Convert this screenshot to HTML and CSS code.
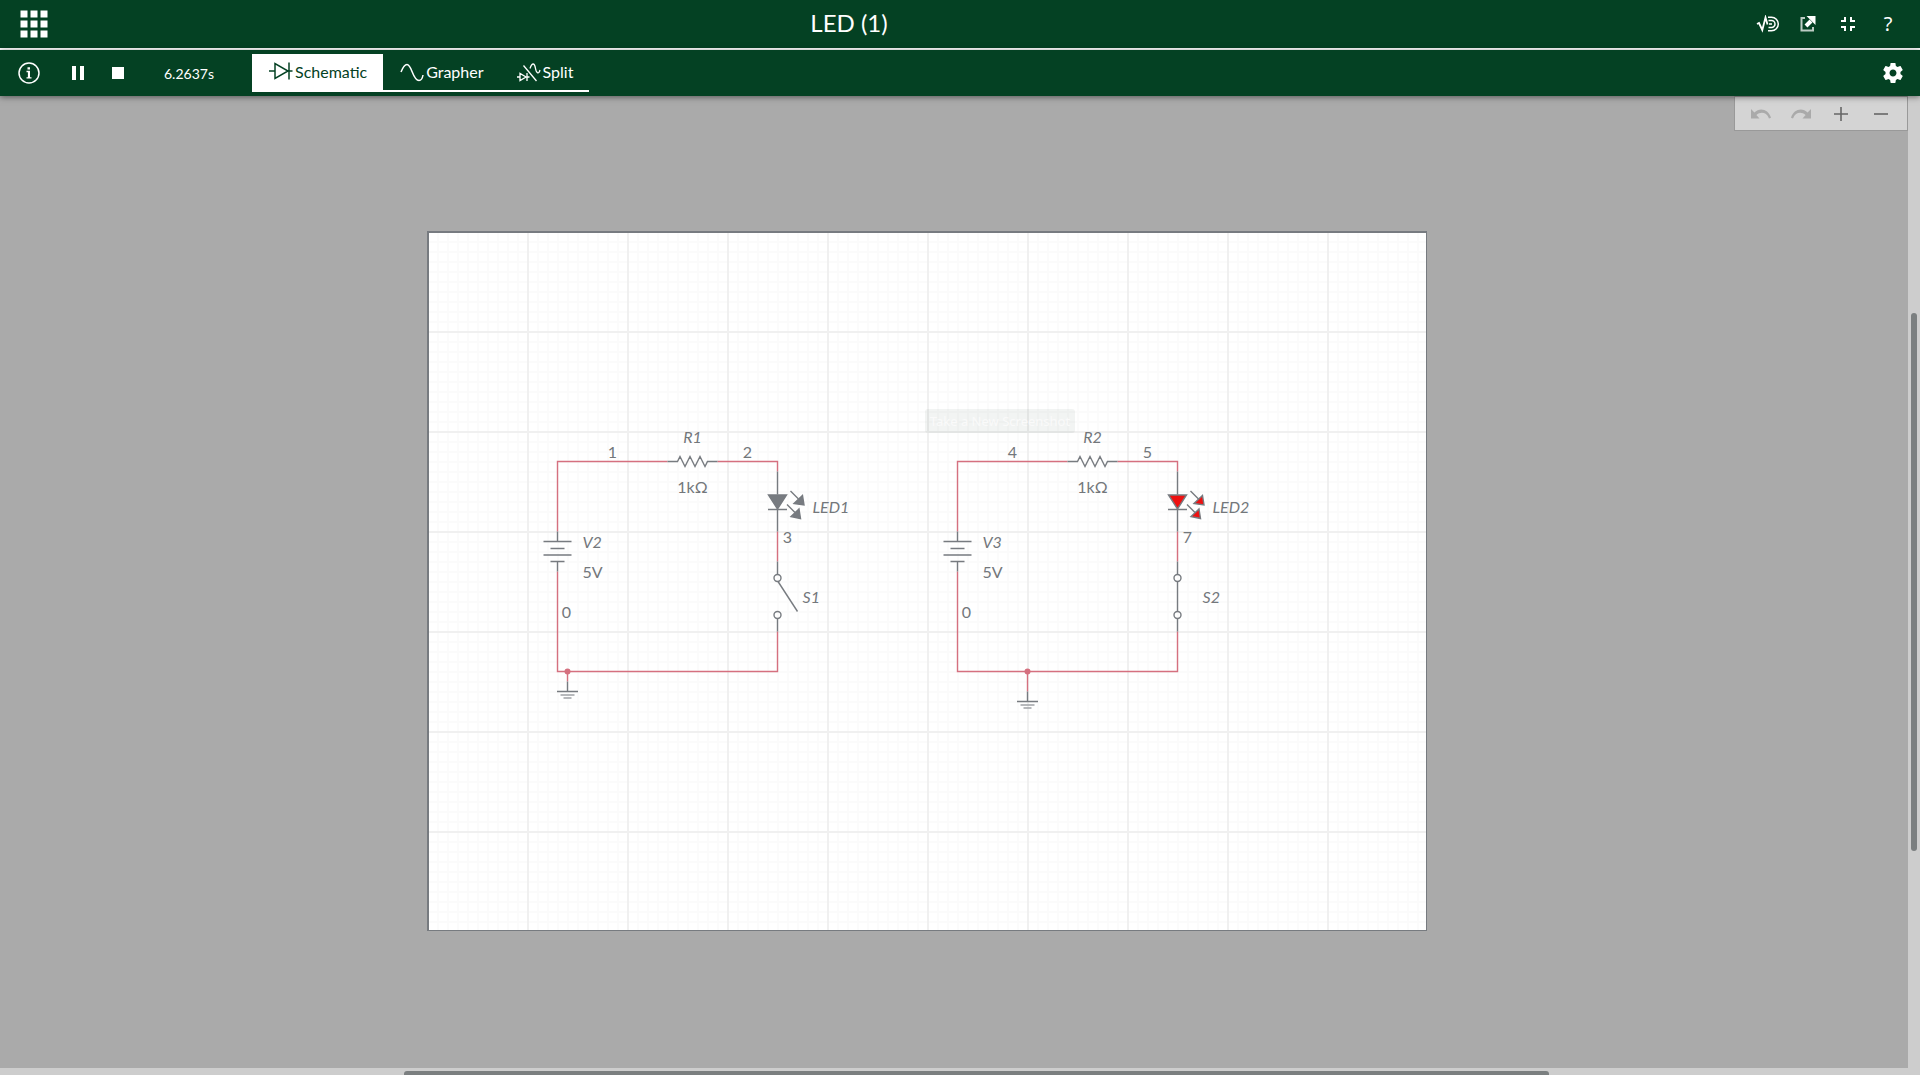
FILE: index.html
```
<!DOCTYPE html>
<html lang="en">
<head>
<meta charset="utf-8">
<title>LED (1)</title>
<meta name="viewport" content="width=device-width, initial-scale=1">
<link rel="stylesheet" href="styles.css">
</head>
<body>
<div class="app">
  <header class="titlebar">
    <button class="icon-btn apps-btn" aria-label="Apps">
      <svg width="28" height="28" viewBox="0 0 28 28" fill="#fff"><path d="M.5.5h7v7h-7zM10.500.5h7v7h-7zM20.500.5h7v7h-7zM.5 10.500h7v7h-7zM10.500 10.500h7v7h-7zM20.500 10.500h7v7h-7zM.5 20.500h7v7h-7zM10.500 20.500h7v7h-7zM20.500 20.500h7v7h-7z"/></svg>
    </button>
    <h1 class="title">LED (1)</h1>
    <div class="title-actions">
      <button class="icon-btn" aria-label="Multisim Touch">
        <svg width="24" height="18" viewBox="0 0 24 18" fill="none" stroke="#fff" stroke-width="1.800"><path d="M1 9l2-1 3.300 7L9.500 2.500l2 7"/><path stroke-width="1.500" d="M12 2.200h3.500a6.800 6.800 0 0 1 0 13.600H12M12.500 5.500h3a3.500 3.500 0 0 1 0 7H12.500M13 9h3"/></svg>
      </button>
      <button class="icon-btn" aria-label="Share">
        <svg width="16" height="16" viewBox="0 0 16 16" fill="none"><path stroke="#bccbc3" stroke-width="2" d="M5 2H1.500v12.500H13V11"/><path stroke="#fff" stroke-width="4" d="M6 10l5-5"/><path fill="#fff" d="M6.500 0H15.500v9z"/></svg>
      </button>
      <button class="icon-btn" aria-label="Exit full screen">
        <svg width="14" height="14" viewBox="0 0 14 14" fill="none" stroke="#fff" stroke-width="2"><path d="M4 0v4H0M10 0v4h4M0 10h4v4M14 10h-4v4"/></svg>
      </button>
      <button class="icon-btn help-btn" aria-label="Help">?</button>
    </div>
  </header>

  <div class="toolbar">
    <div class="sim-controls">
      <button class="icon-btn" aria-label="Document info">
        <svg width="22" height="22" viewBox="0 0 22 22"><circle cx="11" cy="11" r="10" fill="none" stroke="#fff" stroke-width="1.500"/><path fill="#fff" d="M9.500 5.200h2.500v2.200H9.500zM8.500 8.800H12v6.400h1.500v1.300h-5v-1.300h1.400v-5H8.500z"/></svg>
      </button>
      <button class="icon-btn" aria-label="Pause simulation">
        <svg width="12" height="14" viewBox="0 0 12 14" fill="#fff"><path d="M0 0h4v14H0zM8 0h4v14H8z"/></svg>
      </button>
      <button class="icon-btn" aria-label="Stop simulation">
        <svg width="12" height="12" viewBox="0 0 12 12"><path fill="#fff" d="M0 0h12v12H0z"/></svg>
      </button>
    </div>
    <output class="sim-time">6.2637s</output>
    <nav class="tabs" aria-label="Views">
      <button class="tab tab-active"><svg width="24" height="20" viewBox="0 0 24 20" fill="none" stroke="currentColor" stroke-width="1.500"><path d="M0 9h6M6 1.500v15L19 9zM20 .5v17M20 9h3.500"/></svg>Schematic</button>
      <button class="tab"><svg width="24" height="20" viewBox="0 0 24 20" fill="none" stroke="currentColor" stroke-width="1.500"><path d="M1 10C3 5 4.500 2.500 7 2.500c5 0 5.500 16 12 16 2.200 0 3.500-2.500 4-5.500"/></svg>Grapher</button>
      <button class="tab"><svg width="24" height="20" viewBox="0 0 24 20" fill="none" stroke="currentColor" stroke-width="1.300"><path d="M0 15h3M3 11.500v7L9 15zM10 11v8M10 15h2.500M6.500 3.500l13 15.500M13 6.500c2-6 4.500-6 5.500 0 .8 5 3.500 6 4.500 1.500"/></svg>Split</button>
    </nav>
    <button class="icon-btn settings-btn" aria-label="Settings">
      <svg width="24" height="24" viewBox="0 0 24 24" fill="#fff"><path d="M19.430 12.980c.04-.32.070-.640.070-.980s-.030-.660-.070-.980l2.110-1.650c.190-.150.240-.420.120-.640l-2-3.460c-.120-.220-.390-.300-.610-.220l-2.490 1c-.520-.400-1.080-.730-1.690-.980l-.380-2.650C14.460 2.180 14.250 2 14 2h-4c-.250 0-.460.180-.490.420l-.380 2.650c-.610.250-1.170.590-1.690.980l-2.490-1c-.230-.090-.490 0-.610.220l-2 3.460c-.130.220-.070.490.120.640l2.110 1.650c-.040.320-.070.650-.070.980s.030.660.070.980l-2.110 1.650c-.190.150-.240.420-.120.640l2 3.460c.120.220.390.300.610.220l2.490-1c.520.400 1.080.730 1.690.980l.380 2.650c.030.240.240.420.490.420h4c.250 0 .460-.180.490-.420l.380-2.650c.610-.250 1.170-.590 1.690-.980l2.490 1c.230.090.490 0 .610-.220l2-3.460c.120-.220.070-.490-.120-.640l-2.110-1.650zM12 15.500c-1.930 0-3.500-1.570-3.500-3.500s1.570-3.500 3.500-3.500 3.500 1.570 3.500 3.500-1.570 3.500-3.500 3.500z"/></svg>
    </button>
  </div>

  <main class="workspace">
    <div class="canvas">
      <div class="sheet">
        <svg class="drawing" viewBox="1 1 997 697" role="img" aria-label="Two LED circuits, one with its switch open and one closed">
          <defs>
            <pattern id="minor" width="10" height="10" patternUnits="userSpaceOnUse"><path class="grid-minor" d="M0 0h10M0 10h10M0 0v10M10 0v10"/></pattern>
            <pattern id="major" width="100" height="100" patternUnits="userSpaceOnUse"><path class="grid-major" d="M0 0h100M0 100h100M0 0v100M100 0v100"/></pattern>
            <g id="loop">
              <path class="wire" d="M110 0H0v70M160 0h60v10M220 70v30M220 170v40H0V110"/>
              <path class="part" d="M110 0h10l2.500-5 5 10 5-10 5 10 5-10 5 10 2.500-5h10"/>
              <path class="part" d="M0 70v10M-14 80h28M-7 87h14M-14 93.500h28M-7 100h14M0 100v10"/>
              <path class="part" d="M220 10v23M220 48v22M210.500 48h19M233 29.500l8 8M229.500 43l8 8"/>
              <path class="part emitter" d="M211 33.500h18l-9 14zM245 34l1.500 9.500-10-1.500zM241.500 47.500l1.500 9.500-9.500-2z"/>
              <path class="part" d="M220 100v13M220 157v13"/>
              <circle class="part" cx="220" cy="116.500" r="3.500"/>
              <circle class="part" cx="220" cy="153.500" r="3.500"/>
            </g>
            <g id="ground">
              <path class="part" d="M0-10V0M-10.500 0h21"/>
              <path class="part part-light" d="M-7 3.500H7M-4 6.500h8"/>
            </g>
          </defs>
          <rect width="1000" height="700" fill="url(#minor)"/>
          <rect width="1000" height="700" fill="url(#major)"/>

          <g transform="translate(129.500 229.500)">
            <use class="led-off" href="#loop"/>
            <path class="part" d="M220.500 120L240 150"/>
            <path class="wire" d="M10 210v10"/>
            <circle class="junction" cx="10" cy="210" r="3"/>
            <use href="#ground" x="10" y="230"/>
            <g class="net">
              <text x="55" y="-4">1</text>
              <text x="190" y="-4">2</text>
              <text x="230" y="81">3</text>
              <text x="9" y="156">0</text>
              <text x="135" y="31">1kΩ</text>
              <text class="name" x="135" y="-19">R1</text>
            </g>
            <text class="name" x="25" y="86">V2</text>
            <text x="25" y="116">5V</text>
            <text class="name" x="255" y="51">LED1</text>
            <text class="name" x="245" y="141">S1</text>
          </g>

          <g transform="translate(529.500 229.500)">
            <use class="led-on" href="#loop"/>
            <path class="part" d="M220 120v30"/>
            <path class="wire" d="M70 210v20"/>
            <circle class="junction" cx="70" cy="210" r="3"/>
            <use href="#ground" x="70" y="240"/>
            <g class="net">
              <text x="55" y="-4">4</text>
              <text x="190" y="-4">5</text>
              <text x="230" y="81">7</text>
              <text x="9" y="156">0</text>
              <text x="135" y="31">1kΩ</text>
              <text class="name" x="135" y="-19">R2</text>
            </g>
            <text class="name" x="25" y="86">V3</text>
            <text x="25" y="116">5V</text>
            <text class="name" x="255" y="51">LED2</text>
            <text class="name" x="245" y="141">S2</text>
          </g>
        </svg>
        <div class="tooltip">Take a New Screenshot</div>
      </div>
      <div class="zoom-controls">
        <button class="icon-btn" aria-label="Undo" disabled>
          <svg width="20" height="10" viewBox="0 0 20 10"><path fill="#aaa" d="M0 0v9.500h8.500L5.400 6C9.500 2.500 15.500 3 18 9.500l2-.8C17.500.5 9 -2 3.400 3.600z"/></svg>
        </button>
        <button class="icon-btn" aria-label="Redo" disabled>
          <svg width="20" height="10" viewBox="0 0 20 10"><path fill="#aaa" d="M20 0v9.500h-8.500L14.600 6C10.500 2.500 4.500 3 2 9.500l-2-.8C2.500.5 11 -2 16.600 3.600z"/></svg>
        </button>
        <button class="icon-btn" aria-label="Zoom in">
          <svg width="14" height="14" viewBox="0 0 14 14"><path stroke="#666" stroke-width="1.600" d="M0 7h14M7 0v14"/></svg>
        </button>
        <button class="icon-btn" aria-label="Zoom out">
          <svg width="14" height="14" viewBox="0 0 14 14"><path stroke="#666" stroke-width="1.600" d="M0 7h14"/></svg>
        </button>
      </div>
    </div>
    <div class="track track-y"><div class="thumb-y"></div></div>
    <div class="track track-x"><div class="thumb-x"></div></div>
  </main>
</div>
</body>
</html>
```
FILE: styles.css
```
* { box-sizing: border-box; }

body {
  margin: 0;
  font-family: Lato, sans-serif;
  background: #aaa;
}

button {
  font: inherit;
  color: inherit;
  background: none;
  border: 0;
  padding: 0;
  margin: 0;
}

svg { display: block; flex: none; }

.app {
  display: flex;
  flex-direction: column;
  min-height: 100vh;
}

.icon-btn {
  display: flex;
  align-items: center;
  justify-content: center;
  width: 40px;
  height: 32px;
}

/* Title bar */
.titlebar {
  display: flex;
  align-items: center;
  height: 50px;
  color: #fff;
  background: #044123;
  border-bottom: 2px solid #fff;
}

.apps-btn {
  width: 68px;
}

.title {
  flex: 1;
  margin: 0;
  padding: 0 118px 2px 0;
  font-size: 24px;
  font-weight: 400;
  line-height: 32px;
  text-align: center;
}

.title-actions {
  display: flex;
  padding-right: 12px;
}

.help-btn {
  padding-bottom: 2px;
  font-family: "Noto Sans", sans-serif;
  font-size: 20px;
}

/* Toolbar */
.toolbar {
  position: relative;
  z-index: 1;
  display: flex;
  align-items: center;
  height: 46px;
  padding-left: 9px;
  color: #fff;
  background: #044123;
  box-shadow: 0 1px 6px rgba(0, 0, 0, 0.5);
}

.sim-controls {
  display: flex;
}

.sim-controls .icon-btn:first-child {
  margin-right: 9px;
}

.sim-time {
  width: 114px;
  padding: 2px 0 0 26px;
  font-size: 14px;
  line-height: 20px;
}

.tabs {
  display: flex;
  height: 38px;
  border-bottom: 2px solid #fff;
}

.tab {
  display: flex;
  align-items: center;
  gap: 2px;
  padding: 0 16px 0 17px;
  font-size: 16px;
  line-height: 20px;
}

.tab-active {
  color: #044123;
  background: #fff;
}

.settings-btn {
  margin-left: auto;
  margin-right: 7px;
}

/* Workspace */
.workspace {
  flex: 1;
  display: grid;
  grid-template-columns: 1fr 12px;
  grid-template-rows: 1fr 7px;
}

.canvas {
  position: relative;
  display: flex;
  align-items: center;
  justify-content: center;
  padding: 40px 54px 42px 0;
  background: #aaa;
}

.sheet {
  position: relative;
  width: 1000px;
  max-width: 100%;
  background: #fff;
  border: solid #777b80;
  border-width: 2px 1px 1px 2px;
}

.drawing {
  width: 100%;
  height: auto;
  font-size: 16px;
  fill: #73777b;
}

.grid-minor { stroke: #fbfbfb; stroke-width: 2; }
.grid-major { stroke: #f0f0f0; stroke-width: 2; }

.wire {
  fill: none;
  stroke: #d5707f;
  stroke-width: 1.4;
}

.junction { fill: #d5707f; }

.part {
  fill: none;
  stroke: #777b80;
  stroke-width: 1.4;
}

.part-light { stroke: #a0a3a7; }

.part.emitter { fill: inherit; }
.led-off { fill: #777b80; }
.led-on { fill: #ee1111; }

.net { text-anchor: middle; }
.name { font-style: italic; }

.tooltip {
  position: absolute;
  left: 496px;
  top: 176px;
  width: 150px;
  padding: 2px 0;
  font-family: "Noto Sans", sans-serif;
  font-size: 13px;
  line-height: 20px;
  text-align: center;
  white-space: nowrap;
  color: #fafafa;
  background: rgba(4, 40, 23, 0.05);
  border-radius: 3px;
}

.zoom-controls {
  position: absolute;
  top: 0;
  right: 0;
  display: flex;
  align-items: center;
  height: 35px;
  padding: 0 6px;
  background: #d4d4d4;
  border: 1px solid #999;
}

.track { background: #cdcdcd; }

.track-y {
  grid-column: 2;
  grid-row: 1 / 3;
  display: flex;
  justify-content: center;
  align-items: flex-start;
}

.track-x {
  grid-column: 1;
  grid-row: 2;
  display: flex;
  align-items: flex-end;
}

.thumb-y {
  width: 6px;
  height: 55%;
  margin-top: 217px;
  background: #7b7f80;
  border-radius: 3px;
}

.thumb-x {
  width: 60%;
  height: 4px;
  margin-left: 404px;
  background: #7b7f80;
  border-radius: 3px 3px 0 0;
}
```
